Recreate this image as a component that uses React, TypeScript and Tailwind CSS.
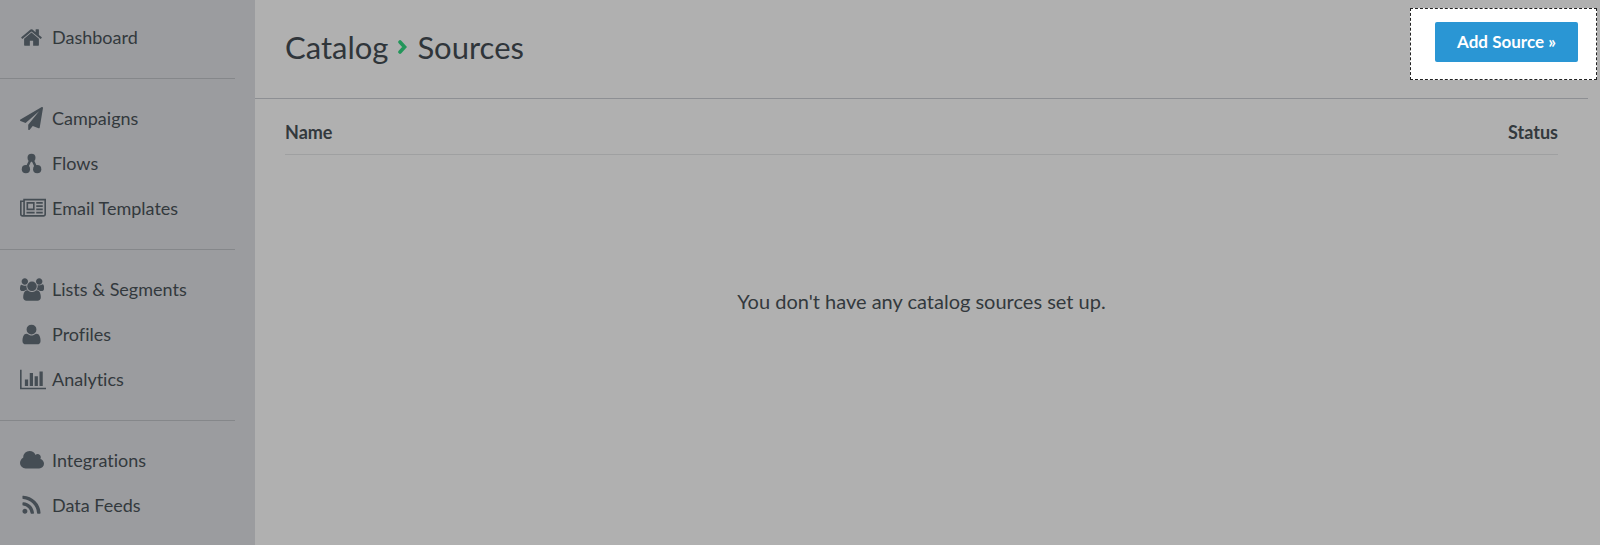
import type { ReactNode } from "react";
import { clsx } from "clsx";

type NavItem = {
  href: string;
  label: string;
  viewBox: string;
  width: string;
  icon: ReactNode;
};

const SQUARE = "0 0 1792 1792";
const WIDE = "0 0 2048 1792";

const navGroups: NavItem[][] = [
  [
    {
      href: "#dashboard",
      label: "Dashboard",
      viewBox: SQUARE,
      width: "w-[23px]",
      icon: (
        <path d="M1472 992v480q0 26-19 45t-45 19h-384v-384h-256v384h-384q-26 0-45-19t-19-45v-480q0-1 .5-3t.5-3l575-474 575 474q1 2 1 6zm223-69l-62 74q-8 9-21 11h-3q-13 0-21-7l-692-577-692 577q-12 8-24 7-13-2-21-11l-62-74q-8-10-7-23.5t11-21.5l719-599q32-26 76-26t76 26l244 204v-195q0-14 9-23t23-9h192q14 0 23 9t9 23v408l219 182q10 8 11 21.5t-7 23.5z" />
      ),
    },
  ],
  [
    {
      href: "#campaigns",
      label: "Campaigns",
      viewBox: SQUARE,
      width: "w-[23px]",
      icon: (
        <path d="M1764 11q33 24 27 64l-256 1536q-5 29-32 45-14 8-31 8-11 0-24-5l-453-185-242 295q-18 23-49 23-13 0-22-4-19-7-30.5-23.5t-11.5-36.5v-349l864-1059-1069 925-395-162q-37-14-40-55-2-40 32-59l1664-960q15-9 32-9 20 0 36 11z" />
      ),
    },
    {
      href: "#flows",
      label: "Flows",
      viewBox: SQUARE,
      width: "w-[23px]",
      icon: (
        <>
          <path
            d="M480 1330L896 440l416 890"
            fill="none"
            stroke="currentColor"
            strokeWidth="190"
          />
          <circle cx="896" cy="450" r="310" />
          <circle cx="460" cy="1340" r="320" />
          <circle cx="1340" cy="1340" r="320" />
        </>
      ),
    },
    {
      href: "#email-templates",
      label: "Email Templates",
      viewBox: WIDE,
      width: "w-[26px]",
      icon: (
        <path d="M1024 512h-384v384h384v-384zm128 640v128h-640v-128h640zm0-768v640h-640v-640h640zm640 768v128h-512v-128h512zm0-256v128h-512v-128h512zm0-256v128h-512v-128h512zm0-256v128h-512v-128h512zm-1536 960v-960h-128v960q0 26 19 45t45 19 45-19 19-45zm1664 0v-1088h-1536v1088q0 33-11 64h1483q26 0 45-19t19-45zm128-1216v1216q0 80-56 136t-136 56h-1664q-80 0-136-56t-56-136v-1088h256v-128h1792z" />
      ),
    },
  ],
  [
    {
      href: "#lists",
      label: "Lists & Segments",
      viewBox: "0 0 1920 1792",
      width: "w-6",
      icon: (
        <path d="M593 896q-162 5-265 128h-134q-82 0-138-40.5t-56-118.5q0-353 124-353 6 0 43.5 21t97.5 42.5 119 21.5q67 0 133-23-5 37-5 66 0 159 93 294zm1071 637q0 120-73 189.5t-194 69.5h-874q-121 0-194-69.5t-73-189.5q0-53 3.5-103.5t14-109 26.5-108.5 43-97.5 62-81 85.5-53.5 111.5-20q10 0 43 21.5t73 48 107 48 135 21.5 135-21.5 107-48 73-48 43-21.5q61 0 111.5 20t85.5 53.5 62 81 43 97.5 26.5 108.5 14 109 3.5 103.5zm-1024-1277q0 106-75 181t-181 75-181-75-75-181 75-181 181-75 181 75 75 181zm704 384q0 159-112.5 271.5t-271.5 112.5-271.5-112.5-112.5-271.5 112.5-271.5 271.5-112.5 271.5 112.5 112.5 271.5zm576 225q0 78-56 118.5t-138 40.5h-134q-103-123-265-128 93-135 93-294 0-29-5-66 66 23 133 23 59 0 119-21.5t97.5-42.5 43.5-21q124 0 124 353zm-128-609q0 106-75 181t-181 75-181-75-75-181 75-181 181-75 181 75 75 181z" />
      ),
    },
    {
      href: "#profiles",
      label: "Profiles",
      viewBox: SQUARE,
      width: "w-[23px]",
      icon: (
        <path d="M1600 1405q0 120-73 189.5t-194 69.5h-874q-121 0-194-69.5t-73-189.5q0-53 3.5-103.5t14-109 26.5-108.5 43-97.5 62-81 85.5-53.5 111.5-20q10 0 43 21.5t73 48 107 48 135 21.5 135-21.5 107-48 73-48 43-21.5q61 0 111.5 20t85.5 53.5 62 81 43 97.5 26.5 108.5 14 109 3.5 103.5zm-320-893q0 159-112.5 271.5t-271.5 112.5-271.5-112.5-112.5-271.5 112.5-271.5 271.5-112.5 271.5 112.5 112.5 271.5z" />
      ),
    },
    {
      href: "#analytics",
      label: "Analytics",
      viewBox: WIDE,
      width: "w-[26px]",
      icon: (
        <path d="M640 896v512h-256v-512h256zm384-512v1024h-256v-1024h256zm1024 1152v128h-2048v-1536h128v1408h1920zm-640-896v768h-256v-768h256zm384-384v1152h-256v-1152h256z" />
      ),
    },
  ],
  [
    {
      href: "#integrations",
      label: "Integrations",
      viewBox: "64 0 1920 1792",
      width: "w-6",
      icon: (
        <path d="M1984 1152q0 159-112.5 271.5t-271.5 112.5h-1088q-185 0-316.5-131.5t-131.5-316.5q0-132 71-241.5t187-163.5q-2-28-2-43 0-212 150-362t362-150q158 0 286.5 88t187.5 230q70-62 166-62 106 0 181 75t75 181q0 75-41 138 129 30 213 134.5t84 239.5z" />
      ),
    },
    {
      href: "#data-feeds",
      label: "Data Feeds",
      viewBox: SQUARE,
      width: "w-[23px]",
      icon: (
        <path d="M576 1344q0 80-56 136t-136 56-136-56-56-136 56-136 136-56 136 56 56 136zm512 123q2 28-17 48-18 21-47 21h-135q-25 0-43-16.5t-20-41.5q-22-229-184.5-391.5t-391.5-184.5q-25-2-41.5-20t-16.5-43v-135q0-29 21-47 17-17 43-17h5q160 13 306 80.5t259 181.5q114 113 181.5 259t80.5 306zm512 2q2 27-18 47-18 20-46 20h-143q-26 0-44.5-17.5t-19.5-42.5q-12-215-101-408.5t-231.5-336-336-231.5-408.5-102q-25-1-42.5-19.5t-17.5-43.5v-143q0-28 20-46 18-18 44-18h3q262 13 501.5 120t425.5 294q187 186 294 425.5t120 501.5z" />
      ),
    },
  ],
];

function Sidebar() {
  return (
    <aside className="w-[255px] shrink-0 bg-[#9b9c9f] pr-5">
      <nav>
        {navGroups.map((group, i) => (
          <ul
            key={group[0].href}
            className={clsx(
              i === 0 ? "pt-[15px]" : "border-t border-[#85878a] pt-[17px]",
              i < navGroups.length - 1 && "pb-[18px]",
            )}
          >
            {group.map((item) => (
              <li key={item.href}>
                <a
                  href={item.href}
                  className="flex h-[45px] items-center pl-5 text-lg text-[#33393d]"
                >
                  <span className="w-8 shrink-0 text-[#454d54]">
                    <svg
                      viewBox={item.viewBox}
                      className={clsx("h-[23px]", item.width)}
                      fill="currentColor"
                      aria-hidden="true"
                    >
                      {item.icon}
                    </svg>
                  </span>
                  <span className="pb-0.5">{item.label}</span>
                </a>
              </li>
            ))}
          </ul>
        ))}
      </nav>
    </aside>
  );
}

function PageHeader() {
  return (
    <header>
      <div className="flex h-[98px] items-start justify-between pt-2 pr-[3px] pl-[30px]">
        <h1 className="flex h-[78px] items-center gap-2.5 text-[31px] text-[#2f353a]">
          <a href="#catalog">Catalog</a>
          <svg viewBox="0 0 9 14" className="h-3.5 w-[9px]" aria-hidden="true">
            <path
              d="M2 2l4.6 5L2 12"
              fill="none"
              stroke="#23965a"
              strokeWidth="3.6"
              strokeLinecap="round"
            />
          </svg>
          <span>Sources</span>
        </h1>
        <div className="border border-dashed border-[#222] bg-white pt-[13px] pr-[18px] pb-[17px] pl-6">
          <button
            type="button"
            className="flex h-10 w-[143px] items-center justify-center rounded-xs bg-[#2a96d4] text-[17px] font-bold text-white"
          >
            Add Source »
          </button>
        </div>
      </div>
      <div className="mr-3 border-t border-[#8d8f93]" />
    </header>
  );
}

export default function App() {
  return (
    <div className="flex min-h-screen bg-[#b0b0b0] font-['Lato',sans-serif] text-[#33393d] [font-variant-ligatures:none]">
      <Sidebar />
      <main className="min-w-0 flex-1">
        <PageHeader />
        <div className="pt-[11px] pr-[42px] pl-[30px]">
          <table className="w-full text-lg">
            <thead>
              <tr className="h-11 border-b border-[#9fa0a1]">
                <th className="text-left font-bold">Name</th>
                <th className="text-right font-bold">Status</th>
              </tr>
            </thead>
            <tbody>
              <tr>
                <td colSpan={2} className="pt-[132px] text-center text-xl">
                  You don't have any catalog sources set up.
                </td>
              </tr>
            </tbody>
          </table>
        </div>
      </main>
    </div>
  );
}
